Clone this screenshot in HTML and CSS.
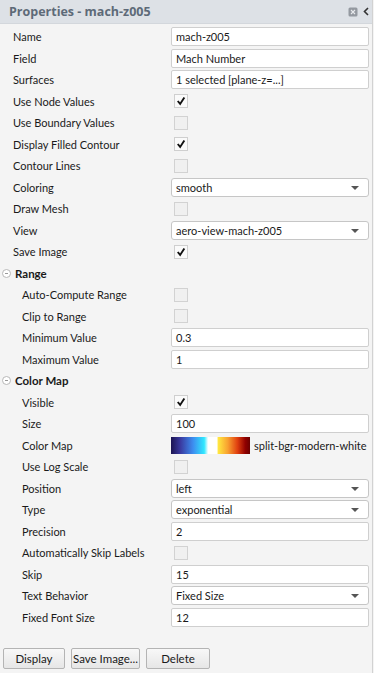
FILE: index.html
```html
<!DOCTYPE html>
<html lang="en">
<head>
  <meta charset="UTF-8">
  <title>Properties - mach-z005</title>
  <link rel="stylesheet" href="styles.css">
</head>
<body>
  <div class="panel">
    <div class="panel-head">
      <span class="title">Properties - mach-z005</span>
      <span class="head-icons">
        <svg class="pin" width="10" height="10" viewBox="0 0 10 10"><rect x="0.5" y="0.5" width="9" height="9" rx="1.5" fill="#9499a0"/><path d="M3 3l4 4M7 3l-4 4" stroke="#e8eaed" stroke-width="1.1"/></svg>
        <svg class="collapse" width="6" height="9" viewBox="0 0 6 9"><path d="M5 1L1.5 4.5 5 8" fill="none" stroke="#333" stroke-width="1.6"/></svg>
      </span>
    </div>

    <div class="props">
      <div class="row"><span class="label">Name</span><div class="field"><span class="input">mach-z005</span></div></div>
      <div class="row"><span class="label">Field</span><div class="field"><span class="input">Mach Number</span></div></div>
      <div class="row"><span class="label">Surfaces</span><div class="field"><span class="input">1 selected [plane-z=...]</span></div></div>
      <div class="row"><span class="label">Use Node Values</span><div class="field"><span class="check on"><svg viewBox="0 0 14 14"><path d="M3.2 7l2.8 3.4 4.9-7.6" fill="none" stroke="#111" stroke-width="2.2"/></svg></span></div></div>
      <div class="row"><span class="label">Use Boundary Values</span><div class="field"><span class="check"></span></div></div>
      <div class="row"><span class="label">Display Filled Contour</span><div class="field"><span class="check on"><svg viewBox="0 0 14 14"><path d="M3.2 7l2.8 3.4 4.9-7.6" fill="none" stroke="#111" stroke-width="2.2"/></svg></span></div></div>
      <div class="row"><span class="label">Contour Lines</span><div class="field"><span class="check"></span></div></div>
      <div class="row"><span class="label">Coloring</span><div class="field"><span class="select">smooth<i class="arrow"></i></span></div></div>
      <div class="row"><span class="label">Draw Mesh</span><div class="field"><span class="check"></span></div></div>
      <div class="row"><span class="label">View</span><div class="field"><span class="select">aero-view-mach-z005<i class="arrow"></i></span></div></div>
      <div class="row"><span class="label">Save Image</span><div class="field"><span class="check on"><svg viewBox="0 0 14 14"><path d="M3.2 7l2.8 3.4 4.9-7.6" fill="none" stroke="#111" stroke-width="2.2"/></svg></span></div></div>

      <div class="row section"><span class="toggle"></span><span class="sec-label">Range</span></div>
      <div class="row sub"><span class="label">Auto-Compute Range</span><div class="field"><span class="check"></span></div></div>
      <div class="row sub"><span class="label">Clip to Range</span><div class="field"><span class="check"></span></div></div>
      <div class="row sub"><span class="label">Minimum Value</span><div class="field"><span class="input">0.3</span></div></div>
      <div class="row sub"><span class="label">Maximum Value</span><div class="field"><span class="input">1</span></div></div>

      <div class="row section"><span class="toggle"></span><span class="sec-label">Color Map</span></div>
      <div class="row sub"><span class="label">Visible</span><div class="field"><span class="check on"><svg viewBox="0 0 14 14"><path d="M3.2 7l2.8 3.4 4.9-7.6" fill="none" stroke="#111" stroke-width="2.2"/></svg></span></div></div>
      <div class="row sub"><span class="label">Size</span><div class="field"><span class="input">100</span></div></div>
      <div class="row sub"><span class="label">Color Map</span><div class="field colormap"><span class="ramp"></span><span class="ramp-name">split-bgr-modern-white</span></div></div>
      <div class="row sub"><span class="label">Use Log Scale</span><div class="field"><span class="check"></span></div></div>
      <div class="row sub"><span class="label">Position</span><div class="field"><span class="select">left<i class="arrow"></i></span></div></div>
      <div class="row sub"><span class="label">Type</span><div class="field"><span class="select">exponential<i class="arrow"></i></span></div></div>
      <div class="row sub"><span class="label">Precision</span><div class="field"><span class="input">2</span></div></div>
      <div class="row sub"><span class="label">Automatically Skip Labels</span><div class="field"><span class="check"></span></div></div>
      <div class="row sub"><span class="label">Skip</span><div class="field"><span class="input">15</span></div></div>
      <div class="row sub"><span class="label">Text Behavior</span><div class="field"><span class="select">Fixed Size<i class="arrow"></i></span></div></div>
      <div class="row sub"><span class="label">Fixed Font Size</span><div class="field"><span class="input">12</span></div></div>
    </div>

    <div class="buttons">
      <button class="btn btn-display">Display</button>
      <button class="btn btn-save">Save Image...</button>
      <button class="btn btn-delete">Delete</button>
    </div>
  </div>
</body>
</html>
```

FILE: styles.css
```css
html, body {
  margin: 0;
  padding: 0;
  background: #f4f4f4;
  font-family: Lato, "Open Sans", sans-serif;
  font-size: 11px;
  color: #1a1a1a;
}

.panel {
  width: 373px;
  height: 673px;
  box-sizing: border-box;
  border-right: 1px solid #d2d2d2;
  background: #f4f4f4;
  display: flex;
  flex-direction: column;
}

.panel-head {
  height: 24px;
  background: #dde1e6;
  display: flex;
  align-items: center;
  justify-content: space-between;
  padding: 0 3px 0 9px;
  border-bottom: 1px solid #d3d7dc;
  box-sizing: border-box;
}

.title {
  font-family: "Open Sans", sans-serif;
  font-weight: 700;
  font-size: 12.5px;
  color: #5d6a78;
}

.head-icons {
  display: flex;
  align-items: center;
  gap: 5px;
}

.props {
  padding-top: 2px;
}

.row {
  height: 21.5px;
  display: grid;
  grid-template-columns: 171px 1fr;
  align-items: center;
}

.label {
  padding-left: 13px;
  white-space: nowrap;
}

.sub .label {
  padding-left: 22px;
}

.field {
  display: flex;
  align-items: center;
  padding-right: 3px;
}

.input,
.select {
  flex: 1;
  height: 19px;
  line-height: 18px;
  box-sizing: border-box;
  background: #fff;
  border: 1px solid #cfcfcf;
  border-radius: 2px;
  padding-left: 4px;
  position: relative;
}

.select {
  border-color: #c6c6c6;
  border-radius: 3px;
}

.arrow {
  position: absolute;
  right: 9px;
  top: 7px;
  width: 0;
  height: 0;
  border-left: 4px solid transparent;
  border-right: 4px solid transparent;
  border-top: 4px solid #555;
}

.check {
  width: 14px;
  height: 14px;
  margin-left: 3px;
  box-sizing: border-box;
  border: 1px solid #d2d2d2;
  background: #f0f0f0;
  display: flex;
}

.check.on {
  background: #fafafa;
  border-color: #cfcfcf;
}

.check svg {
  width: 12px;
  height: 12px;
}

.section {
  display: flex;
  align-items: center;
}

.toggle {
  width: 7px;
  height: 7px;
  margin-left: 2px;
  margin-right: 4px;
  border: 1px solid #b8b8b8;
  border-radius: 50%;
  position: relative;
  background: #fff;
}

.toggle::after {
  content: "";
  position: absolute;
  left: 2px;
  top: 3px;
  width: 3px;
  height: 1px;
  background: #999;
}

.sec-label {
  font-weight: 700;
  font-size: 11.5px;
}

.colormap {
  gap: 4px;
}

.ramp {
  width: 79px;
  height: 17px;
  background: linear-gradient(to right,
    #1c1452 0%, #3a3aa0 12%, #3d8ef0 28%, #30e8ff 42%, #ffffff 47%, #ffffff 58%,
    #ffe640 60%, #f8a030 72%, #e04010 84%, #900000 94%, #6a0000 100%);
}

.ramp-name {
  white-space: nowrap;
}

.buttons {
  margin-top: auto;
  padding: 0 0 4px 3px;
  display: flex;
  gap: 6px;
}

.btn {
  height: 21px;
  font-family: inherit;
  font-size: 11.5px;
  color: #1a1a1a;
  background: linear-gradient(#f8f8f8, #e6e6e6);
  border: 1px solid #b4b4b4;
  border-radius: 2px;
  padding: 0;
}

.btn-display { width: 62px; }
.btn-save { width: 69px; }
.btn-delete { width: 64px; }
```
